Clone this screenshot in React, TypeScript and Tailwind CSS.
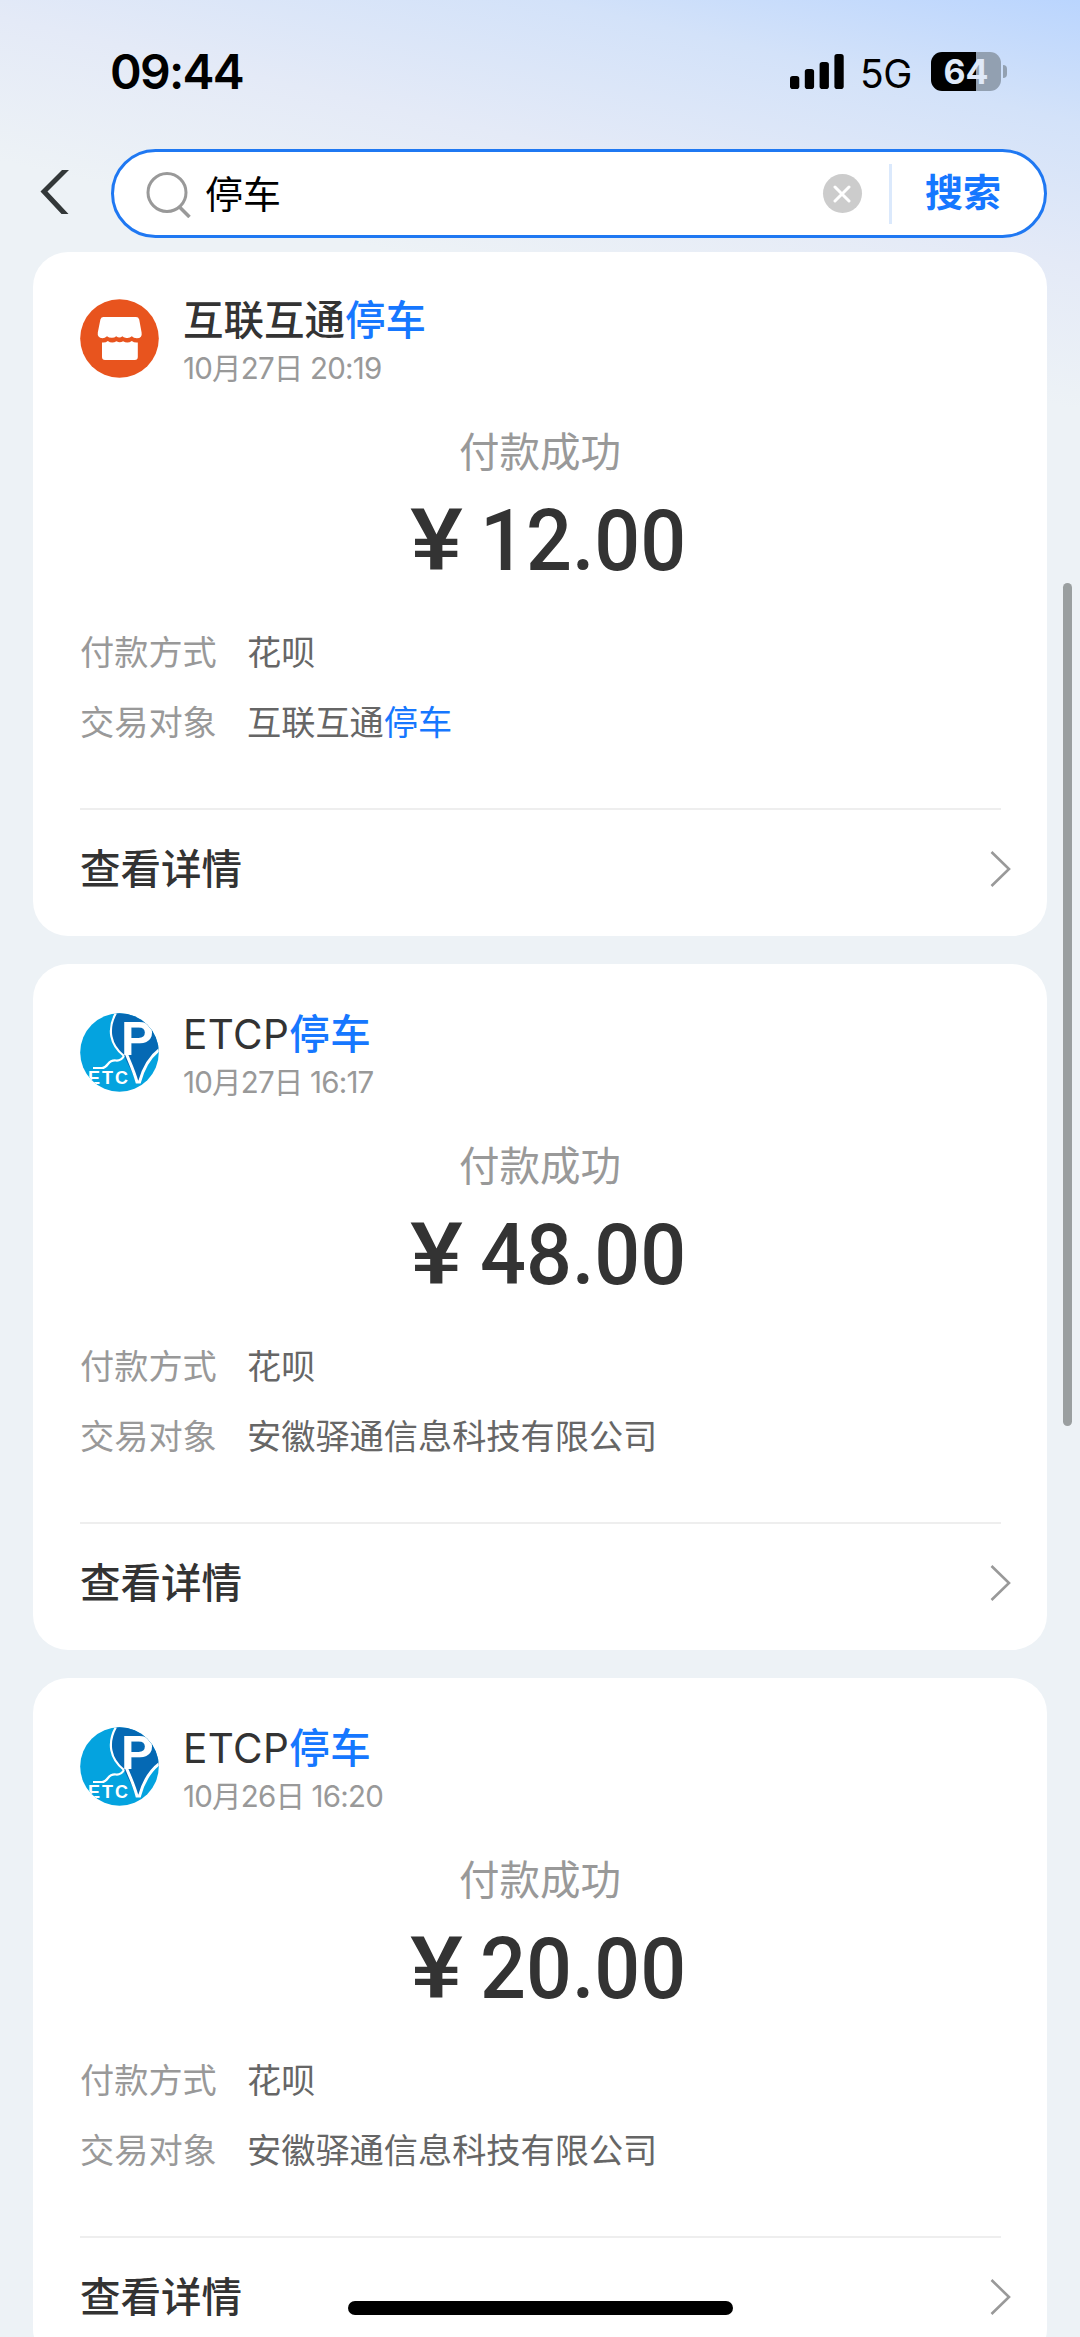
import React from 'react';

interface Payment {
  id: number;
  logo: 'store' | 'etcp';
  name: string;
  date: string;
  amount: string;
  method: string;
  target: string;
}

const KEYWORD = '停车';

const payments: Payment[] = [
  {
    id: 1,
    logo: 'store',
    name: '互联互通停车',
    date: '10月27日 20:19',
    amount: '12.00',
    method: '花呗',
    target: '互联互通停车',
  },
  {
    id: 2,
    logo: 'etcp',
    name: 'ETCP停车',
    date: '10月27日 16:17',
    amount: '48.00',
    method: '花呗',
    target: '安徽驿通信息科技有限公司',
  },
  {
    id: 3,
    logo: 'etcp',
    name: 'ETCP停车',
    date: '10月26日 16:20',
    amount: '20.00',
    method: '花呗',
    target: '安徽驿通信息科技有限公司',
  },
];

// Paints the searched keyword blue inside a longer text
const Highlight: React.FC<{ text: string; className?: string }> = ({ text, className = '' }) => {
  const parts = text.split(KEYWORD);
  return (
    <>
      {parts.map((part, i) => (
        <React.Fragment key={i}>
          {i > 0 && <span className={`text-[#1677ff] ${className}`}>{KEYWORD}</span>}
          {part}
        </React.Fragment>
      ))}
    </>
  );
};

const StoreLogo = () => (
  <svg className="w-[79px] h-[79px] shrink-0" viewBox="0 0 79 79">
    <circle cx="39.5" cy="39.5" r="39.3" fill="#e8541e" />
    <path
      d="M23.500 18h32.500q2.500 0 3.200 2.400l2.400 13q1 5.800-4.800 5.800-3.200 0-5-2-2.600 2.600-6.400 1.500-1.900-.4-3-1.500-3 2.600-6.200 0-1.700 1.600-4.200 1.600-3 .1-5-1.600-2.200 2-4.500 2-5.500-.6-4.700-5.800l2.600-13q.800-2.400 3.100-2.400z"
      fill="#fff"
    />
    <path
      d="M22 43.500q3.500.5 5.800-1.500 4 3 8.700.3 3.200 2 6.600 0 4.400 2.600 8.700-.3 2.600 2 6 1.500v14.500q0 3-3 3h-29.800q-3 0-3-3z"
      fill="#fff"
    />
  </svg>
);

const EtcpLogo = () => (
  <svg className="w-[79px] h-[79px] shrink-0" viewBox="0 0 79 79">
    <defs>
      <clipPath id="etcp-clip">
        <circle cx="39.5" cy="39.5" r="39.3" />
      </clipPath>
    </defs>
    <g clipPath="url(#etcp-clip)">
      <rect width="79" height="79" fill="#04a3df" />
      <path d="M36 0C27 16 30 32 44 43L57 69H59.500C63 56 68 45 80 36V0z" fill="#0569b4" />
      <path d="M36 0C27 16 30 32 44 43" fill="none" stroke="#fff" strokeWidth="2.200" />
      <path d="M46 40C51 52 54 58 57 69H59.500C63 56 68 45 80 36" fill="none" stroke="#fff" strokeWidth="3" />
      <path d="M13 55H22Q25 55 28 51T36 47.500T44 43" fill="none" stroke="#fff" strokeWidth="2.200" />
      <text x="41" y="42" fontFamily="Liberation Sans" fontWeight="700" fontSize="49" fill="#fff">
        P
      </text>
      <text
        x="8"
        y="70.500"
        fontFamily="Liberation Sans"
        fontWeight="700"
        fontSize="18"
        fill="#fff"
        textLength="40"
      >
        ETC
      </text>
    </g>
  </svg>
);

const StatusBar = () => (
  <div className="flex h-[149px] shrink-0 items-start pl-[110px] pr-[73px]">
    <span className="mt-[42px] text-[48px] leading-[60px] font-semibold tracking-[-1.700px] text-black">
      09:44
    </span>
    <div className="ml-auto mt-[52px] flex h-[39px] items-center">
      <svg className="h-[35px] w-[54px]" viewBox="0 0 54 35">
        <rect x="0" y="22" width="9.300" height="13" rx="2.800" />
        <rect x="14.800" y="15" width="9.300" height="20" rx="2.800" />
        <rect x="29.600" y="8" width="9.300" height="27" rx="2.800" />
        <rect x="44.400" y="0" width="9.300" height="35" rx="2.800" />
      </svg>
      <span className="ml-[16px] mt-[3px] w-[54px] text-[39px] leading-[39px] tracking-[-0.500px] text-black">5G</span>
      <div className="ml-[17px] flex h-[39px] w-[70px] items-center justify-center overflow-hidden rounded-[11px] bg-[linear-gradient(90deg,#000_64%,#92a0b1_64%)]">
        <span className="text-[34px] leading-[39px] font-bold text-[#dfe9f8]">64</span>
      </div>
      <div className="ml-[2px] h-[13px] w-[4px] rounded-r-full bg-[#92a0b1]" />
    </div>
  </div>
);

const SearchBar = () => (
  <div className="flex h-[89px] shrink-0 items-center pl-[40px] pr-[33px]">
    <svg className="mb-[3px] h-[46px] w-[32px]" viewBox="0 0 32 46">
      <path d="M22 1h7L7.500 22.500 28.500 45h-7L.5 22.500z" fill="#333839" />
    </svg>
    <div className="ml-[39px] flex h-[89px] flex-1 items-center rounded-full border-[3px] border-[#1f78f2] bg-white">
      <svg className="ml-[31px] h-[48px] w-[46px]" viewBox="0 0 46 48" fill="none" stroke="#999" strokeWidth="3">
        <circle cx="22" cy="22.500" r="19" />
        <path d="M34.500 37L44.500 47" strokeWidth="3.500" />
      </svg>
      <span className="ml-[14px] text-[38px] leading-[50px] text-black">{KEYWORD}</span>
      <div className="ml-auto flex h-[39px] w-[39px] items-center justify-center rounded-full bg-[#ccc]">
        <svg className="h-[18px] w-[18px]" viewBox="0 0 18 18" stroke="#fff" strokeWidth="3" strokeLinecap="round">
          <path d="M2 2L16 16M16 2L2 16" />
        </svg>
      </div>
      <div className="ml-[27px] h-[60px] w-[3px] bg-[#dbe9fc]" />
      <span className="ml-[33px] mr-[43px] mb-[3px] text-[38px] leading-[50px] font-bold text-[#1677ff]">搜索</span>
    </div>
  </div>
);

const PaymentCard: React.FC<{ payment: Payment; first: boolean }> = ({ payment, first }) => (
  <div
    className={`flex shrink-0 flex-col rounded-[35px] bg-white pl-[47px] ${
      first ? 'h-[684px] pt-[47px]' : 'h-[686px] pt-[49px]'
    }`}
  >
    <div className="flex h-[88px] gap-[24px]">
      {payment.logo === 'store' ? <StoreLogo /> : <EtcpLogo />}
      <div className="flex flex-col">
        <span
          className={`mt-px text-[40.500px] leading-[42px] text-[#333] ${
            payment.logo === 'store' ? 'font-medium' : 'font-normal tracking-[0.400px]'
          }`}
        >
          <Highlight text={payment.name} className="font-medium" />
        </span>
        <span className="mt-[8px] text-[29.500px] leading-[36px] tracking-[-0.800px] text-[#999]">
          {payment.date}
        </span>
      </div>
    </div>

    <div className="mt-[42px] mr-[47px] text-center text-[40.500px] leading-[48px] text-[#999]">付款成功</div>
    <div className="mt-[20px] flex pl-[330px] font-['Roboto'] text-[86px] leading-[88px] font-medium text-[#333]">
      <span className="w-[70px] origin-left scale-x-[1.160]">¥</span>
      <span className="origin-left scale-x-[0.940]">{payment.amount}</span>
    </div>

    <div className="mt-[44px] flex flex-col gap-[22px] text-[34.200px] leading-[48px] text-[#666]">
      <div className="flex">
        <span className="w-[167px] text-[#999]">付款方式</span>
        <span>{payment.method}</span>
      </div>
      <div className="flex">
        <span className="w-[167px] text-[#999]">交易对象</span>
        <span>
          <Highlight text={payment.target} />
        </span>
      </div>
    </div>

    <div className="mt-[61px] mr-[46px] h-[2px] shrink-0 bg-[#eee]" />
    <div className="flex flex-1 items-center justify-between pb-[8px] pr-[36px]">
      <span className="mt-px text-[40.500px] leading-[48px] font-medium text-[#333]">查看详情</span>
      <svg className="h-[36px] w-[21px]" viewBox="0 0 21 36" fill="none" stroke="#999" strokeWidth="2.600">
        <path d="M1.500 1L19 18L1.500 35" />
      </svg>
    </div>
  </div>
);

export default function App() {
  return (
    <div className="relative h-[2337px] w-[1080px] overflow-hidden bg-[#edf2f6] font-['Inter','Noto_Sans_CJK_SC',sans-serif]">
      <div className="flex h-full flex-col bg-[linear-gradient(193deg,#bad5fe_0px,#d3e2f9_120px,#e4eaf7_260px,#edf2f6_400px)]">
        <StatusBar />
        <SearchBar />
        <div className="mt-[14px] flex flex-col gap-[28px] px-[33px]">
          {payments.map((payment, i) => (
            <PaymentCard key={payment.id} payment={payment} first={i === 0} />
          ))}
        </div>
      </div>
      {/* scroll thumb and home indicator float over the list */}
      <div className="absolute top-[583px] right-[8px] h-[843px] w-[9px] rounded-full bg-[#9a9fa0]" />
      <div className="absolute top-[2301px] left-[348px] h-[14px] w-[385px] rounded-full bg-black" />
    </div>
  );
}
